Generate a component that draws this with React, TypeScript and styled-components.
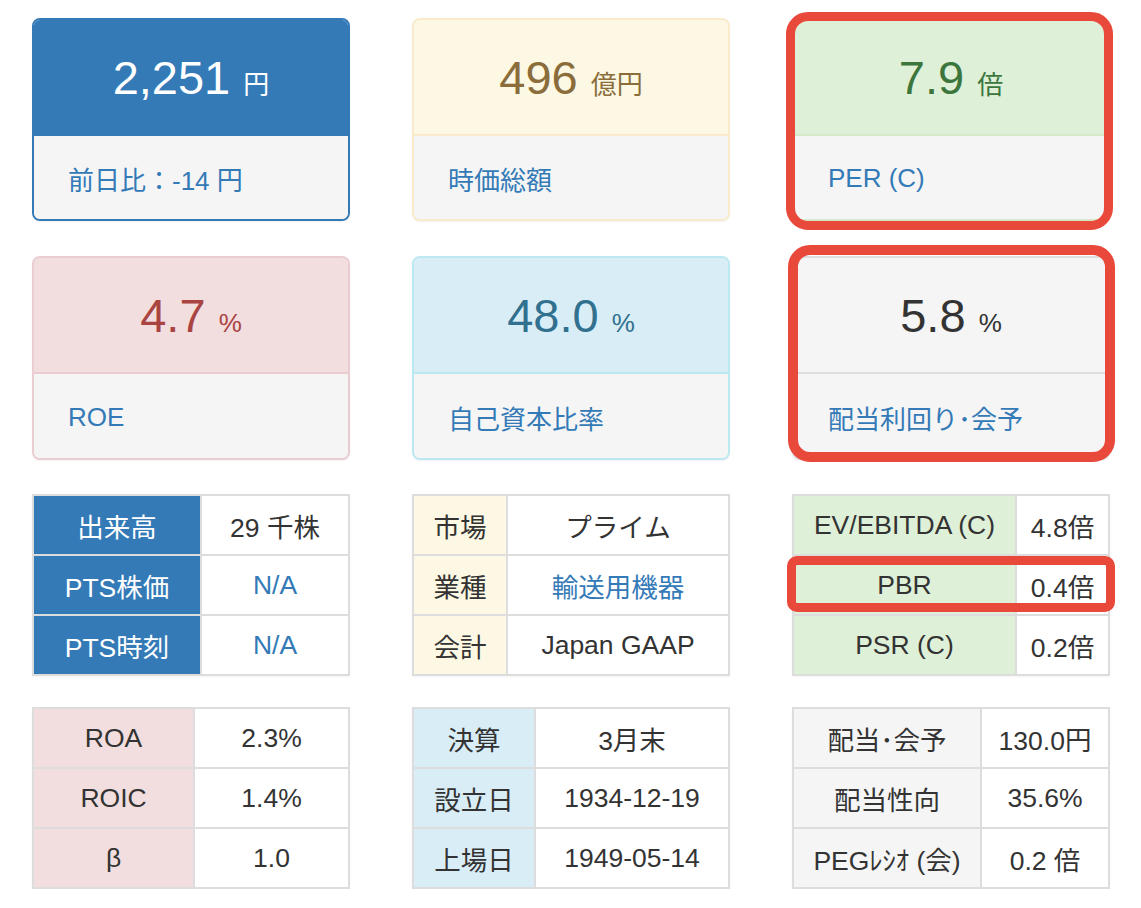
import React from "react";
import styled, { createGlobalStyle } from "styled-components";

type Variant = "primary" | "warning" | "success" | "danger" | "info" | "default";

const palette: Record<Variant, { bg: string; fg: string; border: string; label: string }> = {
  primary: { bg: "#337ab7", fg: "#ffffff", border: "#337ab7", label: "#ffffff" },
  warning: { bg: "#fcf8e3", fg: "#8a6d3b", border: "#faebcc", label: "#333333" },
  success: { bg: "#dff0d8", fg: "#3c763d", border: "#d6e9c6", label: "#333333" },
  danger: { bg: "#f2dede", fg: "#a94442", border: "#ebccd1", label: "#333333" },
  info: { bg: "#d9edf7", fg: "#31708f", border: "#bce8f1", label: "#333333" },
  default: { bg: "#f5f5f5", fg: "#333333", border: "#dddddd", label: "#333333" },
};

const Global = createGlobalStyle`
  html, body { margin: 0; padding: 0; background: #ffffff; }
  body {
    font-family: "Liberation Sans", "Noto Sans CJK JP", Arial, sans-serif;
    color: #333333;
  }
`;

const Page = styled.div`
  width: 1141px;
  padding: 18px 31px 0 32px;
  box-sizing: border-box;
  display: flex;
  flex-direction: column;
`;

const Row = styled.div<{ $top: number }>`
  display: grid;
  grid-template-columns: repeat(3, 318px);
  column-gap: 62px;
  margin-top: ${(p) => p.$top}px;
`;

const Slot = styled.div`
  position: relative;
`;

const Card = styled.div<{ $v: Variant; $h: number }>`
  height: ${(p) => p.$h}px;
  box-sizing: border-box;
  border: 2px solid ${(p) => palette[p.$v].border};
  border-radius: 8px;
  overflow: hidden;
  background: #f5f5f5;
  box-shadow: 0 1px 2px rgba(0, 0, 0, 0.06);
  display: flex;
  flex-direction: column;
`;

const Heading = styled.div<{ $v: Variant }>`
  height: 114px;
  flex: none;
  background: ${(p) => palette[p.$v].bg};
  color: ${(p) => palette[p.$v].fg};
  border-bottom: 2px solid ${(p) => palette[p.$v].border};
  display: flex;
  align-items: center;
  justify-content: center;
`;

const BigValue = styled.span`
  font-size: 47px;
  line-height: 1;
`;

const Unit = styled.span`
  font-size: 26px;
`;

const Footer = styled.div`
  flex: 1;
  background: #f5f5f5;
  padding: 2px 34px 0;
  display: flex;
  align-items: center;
  font-size: 26px;
  color: #337ab7;
`;

const Highlight = styled.div<{ $t: number; $l: number; $r: number; $b: number; $radius: number; $w: number }>`
  position: absolute;
  top: ${(p) => p.$t}px;
  left: ${(p) => p.$l}px;
  right: ${(p) => p.$r}px;
  bottom: ${(p) => p.$b}px;
  border: ${(p) => p.$w}px solid #e8493a;
  border-radius: ${(p) => p.$radius}px;
  pointer-events: none;
`;

const RowHighlight = styled.div`
  position: absolute;
  top: 62px;
  left: -5px;
  right: -5px;
  height: 56px;
  box-sizing: border-box;
  border: 9px solid #e8493a;
  border-radius: 10px;
  pointer-events: none;
`;

const Table = styled.table`
  width: 318px;
  border-collapse: collapse;
  table-layout: fixed;
  background: #ffffff;
  font-size: 26.5px;
  box-shadow: 0 1px 2px rgba(0, 0, 0, 0.05);
`;

const Th = styled.td<{ $v: Variant }>`
  height: 58px;
  border: 2px solid #dddddd;
  background: ${(p) => palette[p.$v].bg};
  color: ${(p) => palette[p.$v].label};
  text-align: center;
  vertical-align: middle;
  padding: 0;
  white-space: nowrap;
`;

const Td = styled.td<{ $link?: boolean }>`
  height: 58px;
  border: 2px solid #dddddd;
  background: #ffffff;
  color: ${(p) => (p.$link ? "#337ab7" : "#333333")};
  text-align: center;
  vertical-align: middle;
  padding: 0;
  white-space: nowrap;
`;

type CardData = {
  v: Variant;
  value: string;
  unit: string;
  label: string;
  hl?: { t: number; l: number; r: number; b: number; radius: number; w: number };
};

const row1: CardData[] = [
  { v: "primary", value: "2,251", unit: "円", label: "前日比：-14 円" },
  { v: "warning", value: "496", unit: "億円", label: "時価総額" },
  { v: "success", value: "7.9", unit: "倍", label: "PER (C)", hl: { t: -6, l: -6, r: -3, b: -9, radius: 22, w: 9 } },
];

const row2: CardData[] = [
  { v: "danger", value: "4.7", unit: "%", label: "ROE" },
  { v: "info", value: "48.0", unit: "%", label: "自己資本比率" },
  { v: "default", value: "5.8", unit: "%", label: "配当利回り･会予", hl: { t: -11, l: -4, r: -5, b: -2, radius: 22, w: 10 } },
];

type Cell = { label: string; value: string; link?: boolean };
type TableData = { v: Variant; labelWidth: number; rows: Cell[]; pbr?: boolean };

const tables1: TableData[] = [
  {
    v: "primary",
    labelWidth: 168,
    rows: [
      { label: "出来高", value: "29 千株" },
      { label: "PTS株価", value: "N/A", link: true },
      { label: "PTS時刻", value: "N/A", link: true },
    ],
  },
  {
    v: "warning",
    labelWidth: 94,
    rows: [
      { label: "市場", value: "プライム" },
      { label: "業種", value: "輸送用機器", link: true },
      { label: "会計", value: "Japan GAAP" },
    ],
  },
  {
    v: "success",
    labelWidth: 223,
    pbr: true,
    rows: [
      { label: "EV/EBITDA (C)", value: "4.8倍" },
      { label: "PBR", value: "0.4倍" },
      { label: "PSR (C)", value: "0.2倍" },
    ],
  },
];

const tables2: TableData[] = [
  {
    v: "danger",
    labelWidth: 161,
    rows: [
      { label: "ROA", value: "2.3%" },
      { label: "ROIC", value: "1.4%" },
      { label: "β", value: "1.0" },
    ],
  },
  {
    v: "info",
    labelWidth: 122,
    rows: [
      { label: "決算", value: "3月末" },
      { label: "設立日", value: "1934-12-19" },
      { label: "上場日", value: "1949-05-14" },
    ],
  },
  {
    v: "default",
    labelWidth: 188,
    rows: [
      { label: "配当･会予", value: "130.0円" },
      { label: "配当性向", value: "35.6%" },
      { label: "PEGﾚｼｵ (会)", value: "0.2 倍" },
    ],
  },
];

function StatCard({ d, h }: { d: CardData; h: number }) {
  return (
    <Slot>
      <Card $v={d.v} $h={h}>
        <Heading $v={d.v}>
          <BigValue>
            {d.value} <Unit>{d.unit}</Unit>
          </BigValue>
        </Heading>
        <Footer>{d.label}</Footer>
      </Card>
      {d.hl && (
        <Highlight $t={d.hl.t} $l={d.hl.l} $r={d.hl.r} $b={d.hl.b} $radius={d.hl.radius} $w={d.hl.w} />
      )}
    </Slot>
  );
}

function InfoTable({ d }: { d: TableData }) {
  return (
    <Slot>
      <Table>
        <colgroup>
          <col style={{ width: d.labelWidth }} />
          <col />
        </colgroup>
        <tbody>
          {d.rows.map((r) => (
            <tr key={r.label}>
              <Th $v={d.v}>{r.label}</Th>
              <Td $link={r.link}>{r.value}</Td>
            </tr>
          ))}
        </tbody>
      </Table>
      {d.pbr && <RowHighlight />}
    </Slot>
  );
}

export default function App() {
  return (
    <>
      <Global />
      <Page>
        <Row $top={0}>
          {row1.map((d) => (
            <StatCard key={d.label} d={d} h={203} />
          ))}
        </Row>
        <Row $top={35}>
          {row2.map((d) => (
            <StatCard key={d.label} d={d} h={204} />
          ))}
        </Row>
        <Row $top={34}>
          {tables1.map((d) => (
            <InfoTable key={d.v} d={d} />
          ))}
        </Row>
        <Row $top={31}>
          {tables2.map((d) => (
            <InfoTable key={d.v} d={d} />
          ))}
        </Row>
      </Page>
    </>
  );
}
